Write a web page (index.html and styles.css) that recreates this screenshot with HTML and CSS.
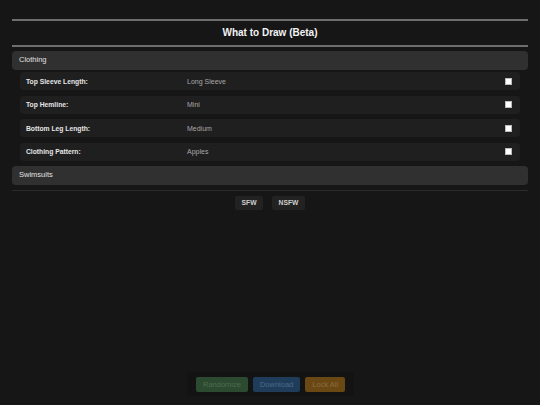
FILE: index.html
```html
<!DOCTYPE html>
<html>
<head>
<meta charset="utf-8">
<link rel="stylesheet" href="styles.css">
</head>
<body>
<div class="page">
  <div class="title">What to Draw (Beta)</div>
  <div class="section">
    <div class="section-header">Clothing</div>
    <div class="rows">
      <div class="row"><span class="label">Top Sleeve Length:</span><span class="value">Long Sleeve</span><span class="check"></span></div>
      <div class="row"><span class="label">Top Hemline:</span><span class="value">Mini</span><span class="check"></span></div>
      <div class="row"><span class="label">Bottom Leg Length:</span><span class="value">Medium</span><span class="check"></span></div>
      <div class="row"><span class="label">Clothing Pattern:</span><span class="value">Apples</span><span class="check"></span></div>
    </div>
  </div>
  <div class="section">
    <div class="section-header">Swimsuits</div>
  </div>
  <div class="divider"></div>
  <div class="modes">
    <button class="mode">SFW</button>
    <button class="mode">NSFW</button>
  </div>
</div>
<div class="footer">
  <button class="act green">Randomize</button>
  <button class="act blue">Download</button>
  <button class="act orange">Lock All</button>
</div>
</body>
</html>
```
FILE: styles.css
```css
html, body {
  margin: 0;
  padding: 0;
  background: #161616;
  font-family: "Liberation Sans", Arial, sans-serif;
  color: #ddd;
}
.page {
  padding: 19px 12px 0;
}
.title {
  border-top: 2px solid #6e6e6e;
  border-bottom: 2px solid #6e6e6e;
  height: 24px;
  line-height: 24px;
  text-align: center;
  font-size: 10px;
  font-weight: bold;
  color: #f2f2f2;
}
.section {
  margin-top: 4px;
}
.section + .section {
  margin-top: 5.5px;
}
.section-header {
  height: 18.5px;
  line-height: 18.5px;
  padding: 0 7px;
  background: #303030;
  border-radius: 4px;
  font-size: 7.5px;
  color: #e0e0e0;
}
.rows {
  display: flex;
  flex-direction: column;
  gap: 5.5px;
  padding: 2.5px 8px 0;
}
.row {
  display: grid;
  grid-template-columns: 161px 1fr auto;
  align-items: center;
  height: 18px;
  padding: 0 8px 0 6px;
  background: #1f1f1f;
  border-radius: 4px;
}
.label {
  font-size: 6.75px;
  font-weight: bold;
  color: #e6e6e6;
}
.value {
  font-size: 7px;
  color: #a8a8a8;
}
.check {
  width: 5px;
  height: 5px;
  background: #fff;
  border: 0.5px solid #bbb;
}
.divider {
  margin-top: 5.5px;
  height: 1px;
  background: #2c2c2c;
}
.modes {
  display: flex;
  justify-content: center;
  gap: 9px;
  margin-top: 4.5px;
}
.mode {
  height: 14px;
  padding: 0 6.5px;
  border: none;
  border-radius: 2px;
  background: #222;
  color: #cfcfcf;
  font-family: "Liberation Sans", Arial, sans-serif;
  font-size: 6.75px;
  font-weight: bold;
}
.footer {
  position: fixed;
  left: 187px;
  bottom: 9px;
  display: flex;
  gap: 5px;
  padding: 5px 9px 4px;
  background: #131313;
  border-radius: 3px;
}
.act {
  height: 15px;
  padding: 0 7px;
  border: none;
  border-radius: 2px;
  font-family: "Liberation Sans", Arial, sans-serif;
  font-size: 7.5px;
}
.green { background: #2c4a2f; color: #4e6b50; }
.blue { background: #1f3d5b; color: #4a6a8a; }
.orange { background: #694814; color: #8b6c42; }
```
